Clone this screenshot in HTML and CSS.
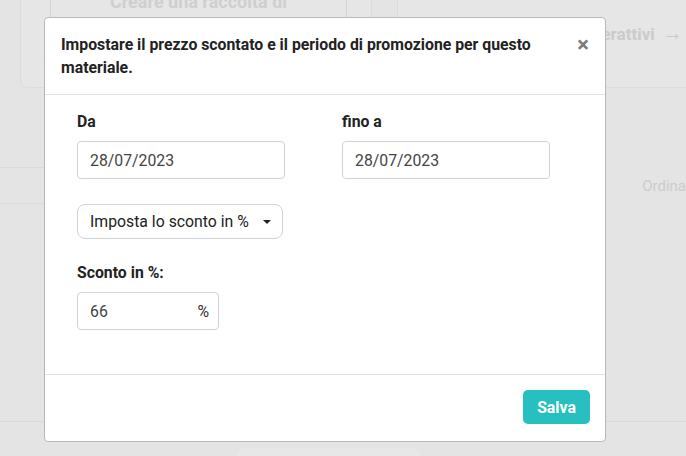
FILE: index.html
```html
<!DOCTYPE html>
<html lang="it">
<head>
<meta charset="utf-8">
<title>Prezzo scontato</title>
<link rel="stylesheet" href="styles.css">
</head>
<body>
<div class="page">
  <div class="cards">
    <div class="card card-left">
      <div class="ghost-btn">Creare una raccolta di<br>materiali</div>
    </div>
    <div class="card card-right">
      <div class="card-link">Materiali interattivi <span class="arrow">→</span></div>
    </div>
  </div>
  <div class="toolbar">
    <div class="side-strip"></div>
    <div class="sort">Ordina</div>
  </div>
  <div class="list-end"></div>
  <div class="pager"></div>
</div>

<div class="modal">
  <div class="modal-header">
    <div class="modal-title">Impostare il prezzo scontato e il periodo di promozione per questo materiale.</div>
    <div class="close">×</div>
  </div>
  <div class="modal-body">
    <div class="dates">
      <div class="field">
        <label class="label">Da</label>
        <div class="input date">28/07/2023</div>
      </div>
      <div class="field">
        <label class="label">fino a</label>
        <div class="input date">28/07/2023</div>
      </div>
    </div>
    <div class="select">
      <span>Imposta lo sconto in %</span>
      <span class="caret"></span>
    </div>
    <label class="label">Sconto in %:</label>
    <div class="input percent"><span>66</span><span>%</span></div>
  </div>
  <div class="modal-footer">
    <button class="save">Salva</button>
  </div>
</div>
</body>
</html>
```
FILE: styles.css
```css
* { box-sizing: border-box; }
html, body { margin: 0; padding: 0; }
body {
  width: 686px;
  height: 456px;
  overflow: hidden;
  background: #e4e4e4;
  font-family: Roboto, "Liberation Sans", Arial, sans-serif;
  position: relative;
}
.page { position: relative; }
.cards {
  display: flex;
  gap: 25px;
  padding-left: 20px;
  margin-top: -40px;
}
.card {
  height: 128px;
  border: 1px solid #dcdcdc;
  border-radius: 8px;
  background: #e6e6e6;
}
.card-left {
  width: 352px;
  padding: 20px 24px 0 29px;
}
.ghost-btn {
  border: 1px solid #d2d2d2;
  border-radius: 4px;
  height: 120px;
  text-align: center;
  color: #cfcfcf;
  font-weight: 700;
  font-size: 18px;
  line-height: 24px;
  padding-top: 8px;
}
.card-right {
  flex: 1;
  margin-right: -20px;
  display: flex;
  justify-content: flex-end;
  padding: 61px 22px 0 0;
}
.card-link {
  color: #cbcbcb;
  font-weight: 700;
  font-size: 17px;
  line-height: 22px;
  white-space: nowrap;
}
.arrow {
  font-size: 21px;
  font-weight: 400;
  margin-left: 3px;
}
.toolbar {
  display: flex;
  justify-content: space-between;
  align-items: center;
  margin-top: 79px;
  height: 37px;
}
.side-strip {
  width: 44px;
  height: 37px;
  border-top: 1px solid #dadada;
  border-bottom: 1px solid #dadada;
}
.sort {
  color: #cccccc;
  font-size: 15px;
  margin-right: 0;
}
.list-end {
  margin-top: 217px;
  border-top: 1px solid #dadada;
}
.pager {
  margin: 26px 0 0 237px;
  width: 183px;
  height: 20px;
  border-radius: 8px;
  background: #e7e7e7;
}

.modal {
  position: absolute;
  left: 44px;
  top: 17px;
  width: 562px;
  height: 425px;
  background: #fff;
  border: 1px solid #b8b8b8;
  border-radius: 4px;
  display: flex;
  flex-direction: column;
  color: #222;
}
.modal-header {
  display: flex;
  justify-content: space-between;
  align-items: flex-start;
  padding: 15px 16px 15px 16px;
  border-bottom: 1px solid #e2e2e2;
}
.modal-title {
  font-size: 15.8px;
  font-weight: 700;
  line-height: 23px;
  width: 490px;
}
.close {
  font-size: 22px;
  font-weight: 700;
  color: #7a7a7a;
  line-height: 23px;
}
.modal-body {
  flex: 1;
  padding: 17px 32px 0 32px;
}
.dates {
  display: grid;
  grid-template-columns: 265px 1fr;
}
.label {
  display: block;
  font-size: 15.8px;
  font-weight: 700;
  line-height: 20px;
  margin-bottom: 9px;
  color: #222;
}
.input {
  height: 38px;
  border: 1px solid #cfd3d8;
  border-radius: 4px;
  padding: 0 11px 0 12px;
  font-size: 15.8px;
  color: #444;
  display: flex;
  align-items: center;
}
.date { width: 208px; }
.select {
  margin-top: 25px;
  margin-bottom: 24px;
  width: 206px;
  height: 35px;
  border: 1px solid #cfd3d8;
  border-radius: 8px;
  padding: 0 11px 0 12px;
  font-size: 15.8px;
  color: #222;
  display: flex;
  align-items: center;
  justify-content: space-between;
}
.caret {
  width: 0;
  height: 0;
  border-left: 4px solid transparent;
  border-right: 4px solid transparent;
  border-top: 4px solid #222;
}
.percent {
  width: 142px;
  justify-content: space-between;
  padding-right: 9px;
  margin-top: 1px;
}
.percent span:last-child { color: #333; }
.modal-footer {
  height: 67px;
  border-top: 1px solid #e0e0e0;
  display: flex;
  justify-content: flex-end;
  align-items: flex-start;
  padding: 15px 15px 0 0;
}
.save {
  width: 67px;
  height: 34px;
  border: none;
  border-radius: 5px;
  background: #27bfbf;
  color: #fff;
  font-family: Roboto, "Liberation Sans", Arial, sans-serif;
  font-size: 15.8px;
  font-weight: 700;
  padding: 0;
}
```
